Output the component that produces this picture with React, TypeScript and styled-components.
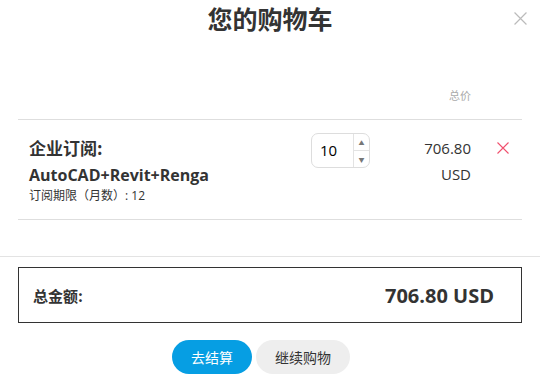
import { createGlobalStyle } from "styled-components";
import styled from "styled-components";

const GlobalStyle = createGlobalStyle`
  html, body {
    margin: 0;
    padding: 0;
    background: #fff;
  }
  body {
    font-family: "Open Sans", "Noto Sans CJK SC", sans-serif;
    color: #333;
  }
`;

const Modal = styled.div`
  position: relative;
  width: 540px;
  height: 392px;
  background: #fff;
  overflow: hidden;
`;

const Title = styled.h1`
  margin: 0;
  padding-top: 3px;
  height: 36px;
  text-align: center;
  font-family: "Noto Sans CJK SC", sans-serif;
  font-size: 25px;
  font-weight: 700;
  line-height: 30px;
  color: #333;
`;

const CloseBtn = styled.button`
  position: absolute;
  top: 12px;
  right: 12px;
  width: 16px;
  height: 16px;
  padding: 0;
  border: none;
  background: none;
  cursor: pointer;
`;

const Cart = styled.div`
  margin: 0 18px;
`;

const Row = styled.div<{ $line?: boolean }>`
  display: grid;
  grid-template-columns: 293px 59px 101px 51px;
  align-items: start;
  ${(p) => (p.$line ? "border-top: 1px solid #dedede; border-bottom: 1px solid #dedede;" : "")}
`;

const HeadRow = styled(Row)`
  margin-top: 45px;
  height: 35px;
`;

const HeadCell = styled.div`
  grid-column: 3;
  text-align: right;
  font-family: "Noto Sans CJK SC", sans-serif;
  font-size: 11px;
  color: #aaa;
  line-height: 16px;
  padding-top: 3px;
`;

const ItemRow = styled(Row)`
  height: 99px;
`;

const Info = styled.div`
  padding: 17px 0 0 11px;
`;

const Kind = styled.div`
  font-family: "Noto Sans CJK SC", sans-serif;
  font-size: 17px;
  font-weight: 700;
  line-height: 22px;
  color: #333;
`;

const Product = styled.div`
  margin-top: 6px;
  font-size: 16px;
  font-weight: 700;
  line-height: 20px;
  color: #333;
`;

const Period = styled.div`
  margin-top: 3px;
  font-family: "Open Sans", "Noto Sans CJK SC", sans-serif;
  font-size: 12px;
  line-height: 16px;
  color: #333;
`;

const Qty = styled.div`
  margin-top: 13px;
  display: flex;
  height: 35px;
  border: 1px solid #ddd;
  border-radius: 7px;
  box-sizing: border-box;
  overflow: hidden;
`;

const QtyValue = styled.div`
  flex: 1;
  padding-left: 8px;
  font-size: 15px;
  line-height: 33px;
  color: #000;
`;

const Spinner = styled.div`
  width: 15px;
  display: flex;
  flex-direction: column;
  border-left: 1px solid #e3e3e3;
`;

const SpinBtn = styled.div<{ $down?: boolean }>`
  flex: 1;
  display: flex;
  align-items: center;
  justify-content: center;
  font-size: 6px;
  color: #777;
  ${(p) => (p.$down ? "border-top: 1px solid #e3e3e3;" : "")}
`;

const Price = styled.div`
  padding-top: 15px;
  text-align: right;
  font-size: 15px;
  line-height: 26px;
  color: #333;
`;

const Remove = styled.button`
  margin: 22px 0 0 26px;
  width: 12px;
  height: 12px;
  padding: 0;
  border: none;
  background: none;
  cursor: pointer;
  display: flex;
`;

const Divider = styled.div`
  margin-top: 36px;
  border-top: 1px solid #e3e3e3;
`;

const TotalBox = styled.div`
  margin: 10px 18px 0;
  height: 56px;
  box-sizing: border-box;
  border: 1px solid #333;
  display: flex;
  align-items: center;
  justify-content: space-between;
  padding: 0 27px 0 14px;
`;

const TotalLabel = styled.div`
  font-family: "Noto Sans CJK SC", sans-serif;
  font-size: 15px;
  font-weight: 700;
  color: #333;
`;

const TotalValue = styled.div`
  font-size: 20px;
  font-weight: 700;
  color: #333;
`;

const Actions = styled.div`
  margin-top: 17px;
  padding-right: 18px;
  display: flex;
  justify-content: center;
  gap: 4px;
`;

const Btn = styled.button<{ $primary?: boolean }>`
  height: 34px;
  padding: 0 19px;
  border: none;
  border-radius: 17px;
  font-family: "Noto Sans CJK SC", sans-serif;
  font-size: 14px;
  background: ${(p) => (p.$primary ? "#069ee3" : "#eeeeee")};
  color: ${(p) => (p.$primary ? "#fff" : "#333")};
  cursor: pointer;
`;

function Cross({ color, size }: { color: string; size: number }) {
  return (
    <svg width={size} height={size} viewBox="0 0 12 12">
      <path d="M0.5 0.5L11.5 11.5M11.5 0.5L0.5 11.5" stroke={color} strokeWidth="1.1" />
    </svg>
  );
}

export default function App() {
  return (
    <>
      <GlobalStyle />
      <Modal>
        <Title>您的购物车</Title>
        <CloseBtn>
          <Cross color="#bbb" size={13} />
        </CloseBtn>
        <Cart>
          <HeadRow>
            <HeadCell>总价</HeadCell>
          </HeadRow>
          <ItemRow $line>
            <Info>
              <Kind>企业订阅:</Kind>
              <Product>AutoCAD+Revit+Renga</Product>
              <Period>订阅期限（月数）: 12</Period>
            </Info>
            <Qty>
              <QtyValue>10</QtyValue>
              <Spinner>
                <SpinBtn>▲</SpinBtn>
                <SpinBtn $down>▼</SpinBtn>
              </Spinner>
            </Qty>
            <Price>
              706.80
              <br />
              USD
            </Price>
            <Remove>
              <Cross color="#f0506e" size={12} />
            </Remove>
          </ItemRow>
        </Cart>
        <Divider />
        <TotalBox>
          <TotalLabel>总金额:</TotalLabel>
          <TotalValue>706.80 USD</TotalValue>
        </TotalBox>
        <Actions>
          <Btn $primary>去结算</Btn>
          <Btn>继续购物</Btn>
        </Actions>
      </Modal>
    </>
  );
}
